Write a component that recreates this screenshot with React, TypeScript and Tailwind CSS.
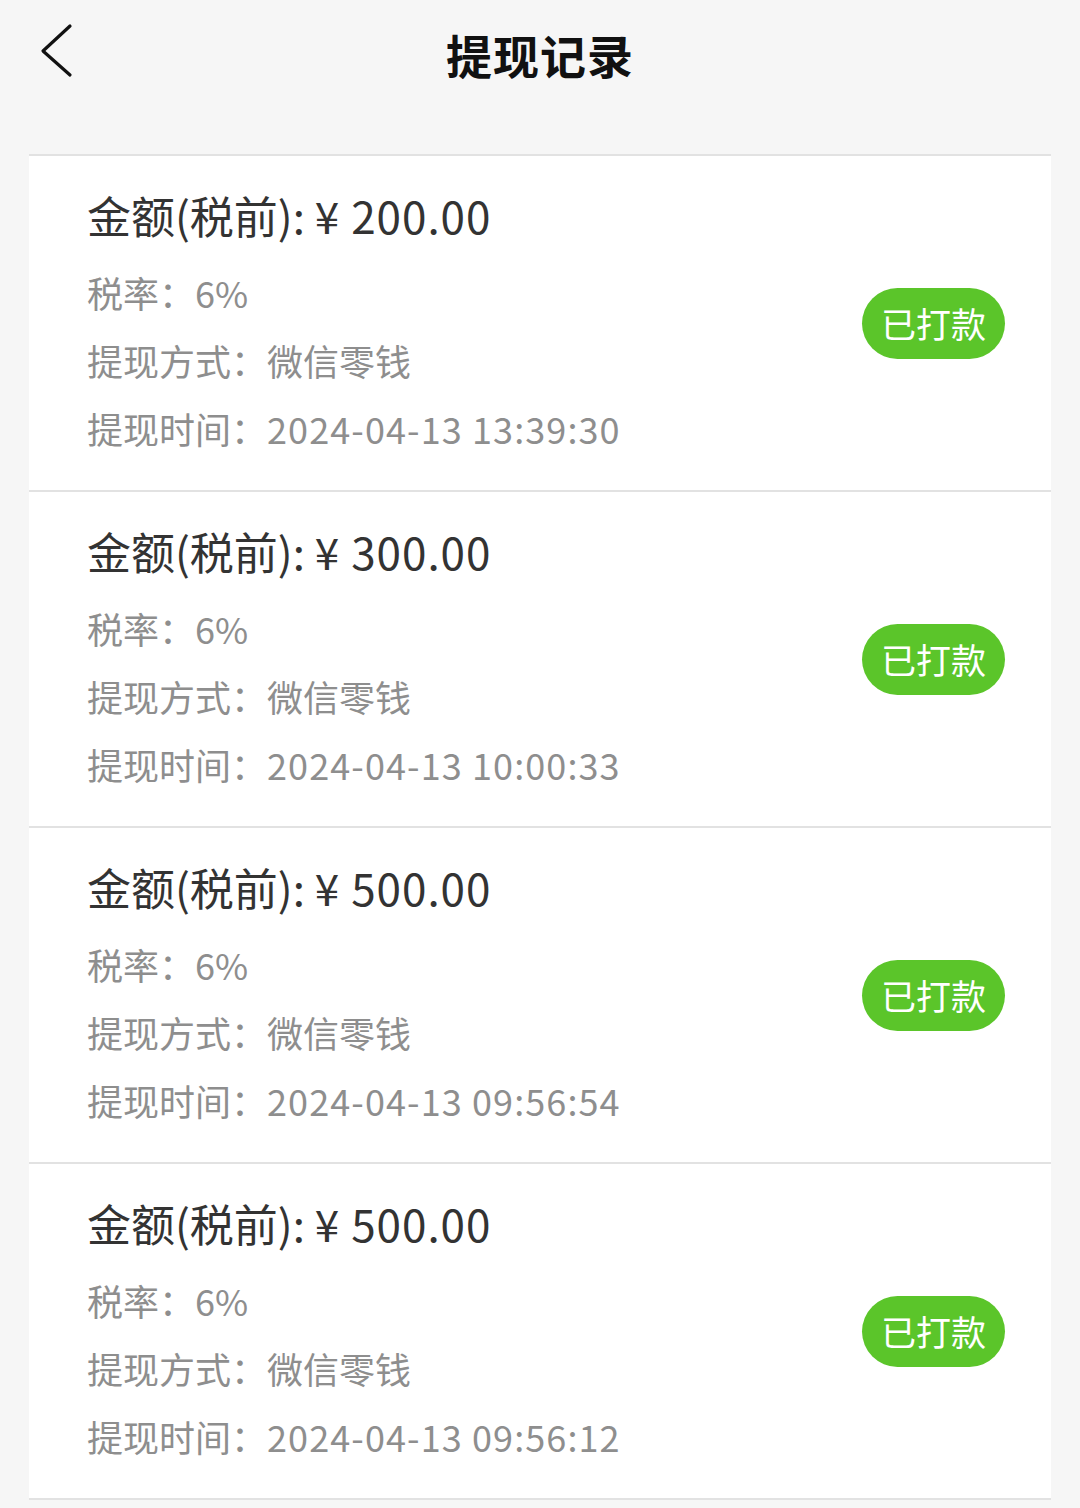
import React from "react";

const records = [
  { amount: "200.00", time: "2024-04-13 13:39:30" },
  { amount: "300.00", time: "2024-04-13 10:00:33" },
  { amount: "500.00", time: "2024-04-13 09:56:54" },
  { amount: "500.00", time: "2024-04-13 09:56:12" },
];

export default function App() {
  return (
    <div
      className="w-[1080px] min-h-[1508px] bg-[#f6f6f6] overflow-hidden"
      style={{ fontFamily: '"Noto Sans CJK SC", "Noto Sans", sans-serif' }}
    >
      <div className="relative h-[154px] flex justify-center">
        <svg
          className="absolute left-[38px] top-[22px]"
          width="40"
          height="58"
          viewBox="0 0 40 58"
          fill="none"
        >
          <path d="M32 4 L5 29 L32 53" stroke="#111" strokeWidth="3.2" strokeLinecap="round" strokeLinejoin="round" />
        </svg>
        <div className="mt-[22px] text-[46px] leading-[64px] font-bold text-[#111] tracking-[1px]">提现记录</div>
      </div>
      <div className="mx-[29px]">
        {records.map((r, i) => (
          <div
            key={i}
            className="h-[336px] bg-white border-t-2 border-[#e2e2e2] flex items-center justify-between pl-[58px] pr-[46px]"
          >
            <div className="flex flex-col self-start pt-[31px]">
              <div className="text-[44px] leading-[56px] text-[#333]">
                金额(税前): <span className="tracking-[1px]">¥ {r.amount}</span>
              </div>
              <div className="mt-[15px] flex flex-col text-[36px] leading-[68px] text-[#8e8e8e]">
                <div>税率：6%</div>
                <div>提现方式：微信零钱</div>
                <div>
                  提现时间：<span className="tracking-[1.1px]">{r.time}</span>
                </div>
              </div>
            </div>
            <div className="w-[143px] h-[71px] rounded-full bg-[#5bc52a] text-white text-[35px] flex items-center justify-center">
              已打款
            </div>
          </div>
        ))}
        <div className="h-[2px] bg-[#e2e2e2]" />
      </div>
    </div>
  );
}
